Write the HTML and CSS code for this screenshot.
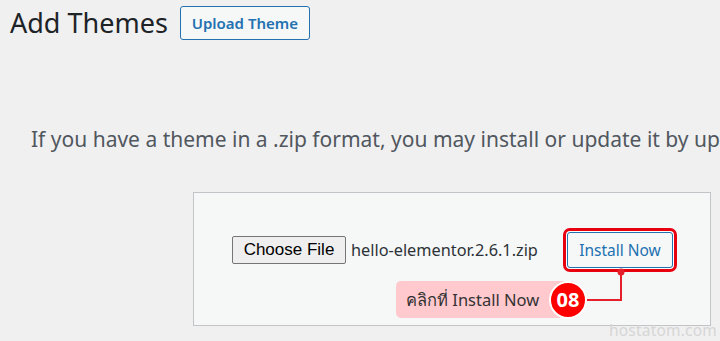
FILE: index.html
```html
<!DOCTYPE html>
<html lang="en">
<head>
<meta charset="utf-8">
<title>Add Themes</title>
<link rel="stylesheet" href="styles.css">
</head>
<body>
<div class="page">
  <div class="header">
    <h1 class="title">Add Themes</h1>
    <button class="upload-theme">Upload Theme</button>
  </div>
  <p class="intro">If you have a theme in a .zip format, you may install or update it by uploading it here.</p>
  <div class="upload-box">
    <div class="form-row">
      <button class="choose-file">Choose File</button>
      <span class="file-name">hello-elementor.2.6.1.zip</span>
      <button class="install-now">Install Now</button>
    </div>
    <div class="callout">
      <div class="label">คลิกที่ Install Now</div>
      <div class="badge">08</div>
      <svg class="connector" width="70" height="40" viewBox="0 0 70 40">
        <path d="M60 4 V32 H24" fill="none" stroke="#e5202b" stroke-width="2"/>
        <circle cx="60" cy="4" r="3.5" fill="#e5202b"/>
      </svg>
    </div>
  </div>
  <div class="watermark">hostatom.com</div>
</div>
</body>
</html>
```
FILE: styles.css
```css
html, body {
  margin: 0;
  padding: 0;
}
body {
  background: #f0f0f1;
  width: 720px;
  height: 341px;
  overflow: hidden;
  font-family: "Noto Sans", "Open Sans", sans-serif;
}
.page {
  position: relative;
  width: 720px;
  height: 341px;
  padding-left: 10px;
  box-sizing: border-box;
  overflow: hidden;
}
.header {
  display: flex;
  align-items: center;
  gap: 12px;
  height: 46px;
}
.title {
  margin: 0;
  font-size: 27px;
  font-weight: 400;
  color: #1d2327;
  line-height: 1;
  padding-bottom: 2px;
}
.upload-theme {
  width: 130px;
  height: 34px;
  padding: 0;
  border: 1px solid #2271b1;
  border-radius: 3px;
  background: #f6f7f7;
  color: #2271b1;
  font-family: "Noto Sans", sans-serif;
  font-size: 15px;
  font-weight: 600;
}
.intro {
  margin: 78px 0 0 21px;
  height: 30px;
  line-height: 30px;
  font-size: 21px;
  color: #50575e;
  white-space: nowrap;
}
.upload-box {
  position: relative;
  margin: 38px 0 0 183px;
  width: 518px;
  height: 134px;
  box-sizing: border-box;
  border: 1px solid #c3c4c7;
  background: #f6f7f7;
  padding: 39px 0 0 38px;
}
.form-row {
  display: flex;
  align-items: center;
  height: 36px;
}
.choose-file {
  width: 114px;
  height: 28px;
  padding: 0;
  border: 1px solid #767676;
  border-radius: 2px;
  background: #efefef;
  color: #000;
  font-family: "Liberation Sans", Arial, sans-serif;
  font-size: 17px;
}
.file-name {
  margin-left: 5px;
  width: 190px;
  font-size: 16.3px;
  color: #2c3338;
  white-space: nowrap;
}
.install-now {
  margin-left: 26px;
  width: 106px;
  height: 36px;
  padding: 0;
  border: 1px solid #2271b1;
  border-radius: 3px;
  background: #f6f7f7;
  color: #2271b1;
  font-family: "Noto Sans", sans-serif;
  font-size: 15.5px;
  box-shadow: 0 0 0 1px #ffffff, 0 0 0 4px #e8000f;
}
.callout {
  position: absolute;
  left: 202px;
  top: 78px;
  width: 240px;
  height: 50px;
}
.connector {
  position: absolute;
  left: 165px;
  top: -3px;
}
.label {
  position: absolute;
  left: 0;
  top: 10px;
  width: 180px;
  height: 37px;
  box-sizing: border-box;
  padding-left: 10px;
  border-radius: 5px;
  background: #ffc9ce;
  color: #333333;
  font-size: 16.5px;
  line-height: 37px;
  white-space: nowrap;
}
.badge {
  position: absolute;
  left: 153px;
  top: 10px;
  z-index: 1;
  width: 38px;
  height: 38px;
  box-sizing: border-box;
  border: 2px solid #ffffff;
  border-radius: 50%;
  background: #ff0000;
  color: #ffffff;
  font-size: 20px;
  font-weight: 700;
  line-height: 34px;
  text-align: center;
}
.watermark {
  position: absolute;
  right: 3px;
  top: 319px;
  font-size: 15.5px;
  line-height: 22px;
  color: #d6d6d6;
  letter-spacing: 0.2px;
}
```
